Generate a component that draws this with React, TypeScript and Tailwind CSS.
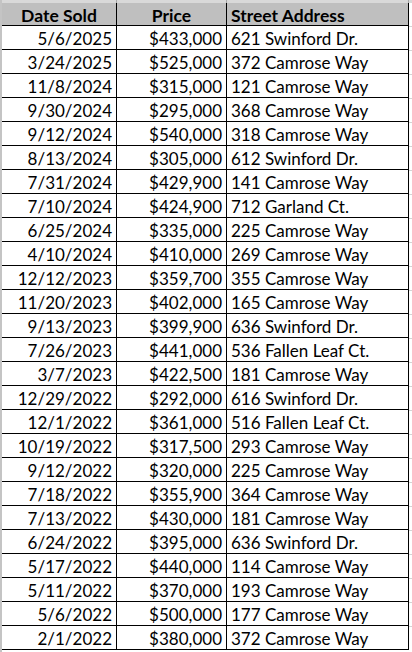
import React from "react";

type Sale = { date: string; price: string; address: string };

const sales: Sale[] = [
  { date: "5/6/2025", price: "$433,000", address: "621 Swinford Dr." },
  { date: "3/24/2025", price: "$525,000", address: "372 Camrose Way" },
  { date: "11/8/2024", price: "$315,000", address: "121 Camrose Way" },
  { date: "9/30/2024", price: "$295,000", address: "368 Camrose Way" },
  { date: "9/12/2024", price: "$540,000", address: "318 Camrose Way" },
  { date: "8/13/2024", price: "$305,000", address: "612 Swinford Dr." },
  { date: "7/31/2024", price: "$429,900", address: "141 Camrose Way" },
  { date: "7/10/2024", price: "$424,900", address: "712 Garland Ct." },
  { date: "6/25/2024", price: "$335,000", address: "225 Camrose Way" },
  { date: "4/10/2024", price: "$410,000", address: "269 Camrose Way" },
  { date: "12/12/2023", price: "$359,700", address: "355 Camrose Way" },
  { date: "11/20/2023", price: "$402,000", address: "165 Camrose Way" },
  { date: "9/13/2023", price: "$399,900", address: "636 Swinford Dr." },
  { date: "7/26/2023", price: "$441,000", address: "536 Fallen Leaf Ct." },
  { date: "3/7/2023", price: "$422,500", address: "181 Camrose Way" },
  { date: "12/29/2022", price: "$292,000", address: "616 Swinford Dr." },
  { date: "12/1/2022", price: "$361,000", address: "516 Fallen Leaf Ct." },
  { date: "10/19/2022", price: "$317,500", address: "293 Camrose Way" },
  { date: "9/12/2022", price: "$320,000", address: "225 Camrose Way" },
  { date: "7/18/2022", price: "$355,900", address: "364 Camrose Way" },
  { date: "7/13/2022", price: "$430,000", address: "181 Camrose Way" },
  { date: "6/24/2022", price: "$395,000", address: "636 Swinford Dr." },
  { date: "5/17/2022", price: "$440,000", address: "114 Camrose Way" },
  { date: "5/11/2022", price: "$370,000", address: "193 Camrose Way" },
  { date: "5/6/2022", price: "$500,000", address: "177 Camrose Way" },
  { date: "2/1/2022", price: "$380,000", address: "372 Camrose Way" },
];

const cols = "grid grid-cols-[115px_110px_182px]";

export default function App() {
  return (
    <div
      className="w-[412px] h-[652px] overflow-hidden bg-white flex flex-col text-black"
      style={{ fontFamily: "Lato, 'Open Sans', sans-serif" }}
    >
      {/* sheet row above, mostly cut off */}
      <div className="h-[3px] flex bg-[#d9d9d9]">
        <div className="w-[2px] bg-[#c4c4c4]" />
        <div className="w-[115px] border-r border-[#a6a6a6]" />
        <div className="w-[110px] border-r border-[#a6a6a6]" />
        <div className="w-[182px] border-r border-[#a6a6a6]" />
      </div>

      <div className="flex flex-1">
        <div className="w-[2px] bg-[#c4c4c4]" />

        <div className="w-[407px] flex flex-col">
          <div className={`${cols} h-[23px] bg-[#bfbfbf] border-b border-black font-bold text-[17.5px]`}>
            <div className="border-r border-black flex items-end justify-center pb-[1px] leading-none">
              Date Sold
            </div>
            <div className="border-r border-black flex items-end justify-center pb-[1px] leading-none">
              Price
            </div>
            <div className="border-r border-black flex items-end pl-[4px] pb-[1px] leading-none">
              Street Address
            </div>
          </div>

          {sales.map((s, i) => (
            <div key={i} className={`${cols} h-[24px] border-b border-black text-[17px] leading-none`}>
              <div className="border-r border-black flex items-end justify-end pr-[4px] pb-[2px]">
                {s.date}
              </div>
              <div className="border-r border-black flex items-end justify-end pr-[4px] pb-[2px]">
                {s.price}
              </div>
              <div className="border-r border-black flex items-end pl-[4px] pb-[2px]">
                {s.address}
              </div>
            </div>
          ))}
        </div>

        <div className="flex-1 bg-white flex flex-col">
          {sales.map((_, i) => (
            <div key={i} className="h-[24px] border-b border-[#d4d4d4]" />
          ))}
        </div>
      </div>
    </div>
  );
}
